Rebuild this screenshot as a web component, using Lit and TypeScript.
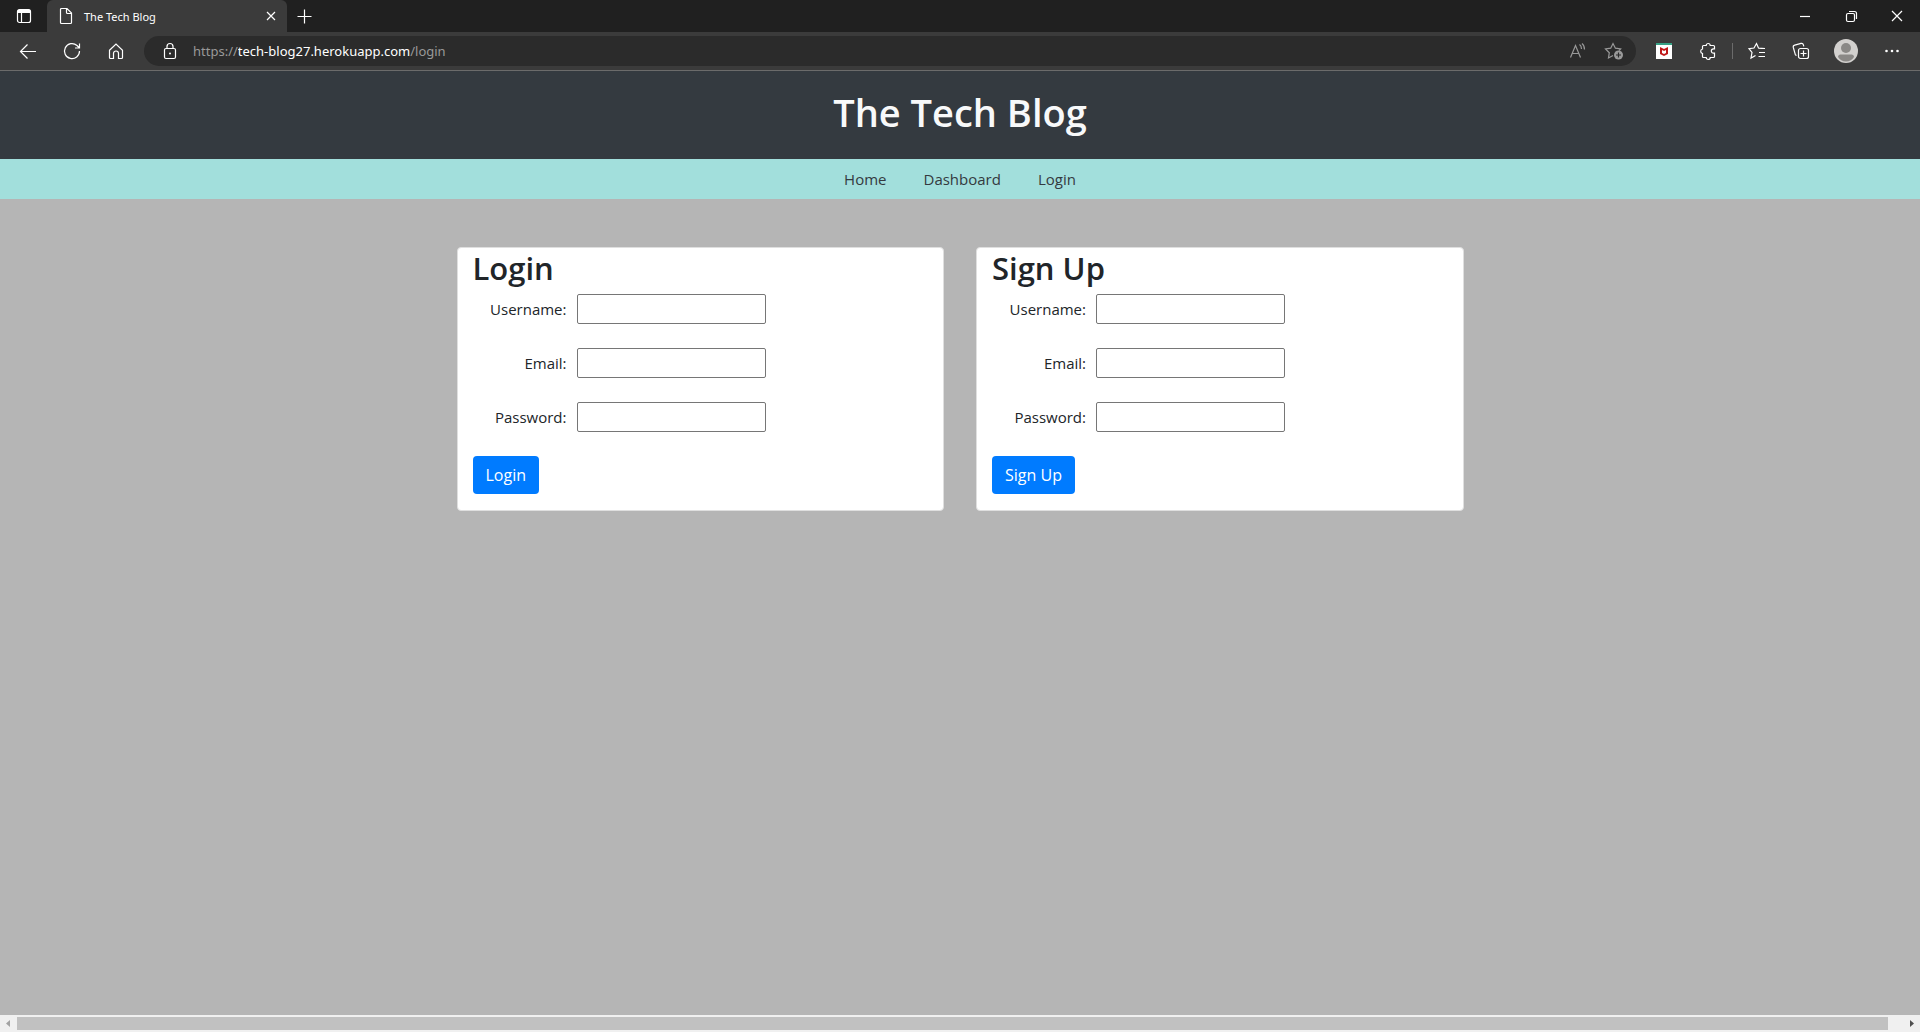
import { LitElement, html, css, svg } from "lit";
import { customElement, property } from "lit/decorators.js";

const icons: Record<string, unknown> = {
  tabs: svg`<rect x="3.5" y="3.5" width="13" height="13" rx="2"/><path class="fill" d="M3.500 5.500a2 2 0 0 1 2-2h9a2 2 0 0 1 2 2v1.500h-13z"/><path d="M7.500 6v10.500"/>`,
  page: svg`<path d="M4.5 3.5a1 1 0 0 1 1-1h5.5l4.5 4.5v9.500a1 1 0 0 1-1 1h-9a1 1 0 0 1-1-1zM10.500 2.500v4a1 1 0 0 0 1 1h4"/>`,
  close: svg`<path d="M6 6l8 8M14 6l-8 8"/>`,
  plus: svg`<path d="M10.500 3.500v14M3.500 10.500h14"/>`,
  back: svg`<path d="M18 10.500H2.500M9.500 3.500l-7 7 7 7"/>`,
  reload: svg`<path d="M17.500 10a7.500 7.500 0 1 1-2.500-5.500l2 2M17.500 2.500v4.500h-4.500"/>`,
  home: svg`<path d="M3.500 9.200l6.500-6.200 6.500 6.200v7.300a1 1 0 0 1-1 1h-3v-5a2 2 0 0 0-5 0v5h-3a1 1 0 0 1-1-1z"/>`,
  lock: svg`<rect x="4.500" y="7.500" width="11" height="10" rx="1.500"/><path d="M7 7.500V5.500a3 3 0 0 1 6 0v2"/><circle class="fill" cx="10" cy="12.500" r="1"/>`,
  read: svg`<path d="M2.500 16.500L7.500 4.500l5 12M4.500 12.500h6M11.500 3.500c1.500 1 2 2.500 2 4.500M14 2.500c2 1.500 2.500 3.500 2.500 6"/>`,
  starAdd: svg`<path d="M9 14.500l-4.500 2.500.8-5.300-3.800-3.700 5.200-.8L9 2.500l2.400 4.700 5.200.8-1.600 1.500"/><circle class="fill" cx="14.500" cy="14" r="4.500"/><path class="cut" d="M14.500 11.500v5M12 14h5"/>`,
  puzzle: svg`<path d="M5.500 4.500h2.700a2 2 0 0 1 4 0h3.300a1 1 0 0 1 1 1v2.300h-1a2.200 2.200 0 0 0 0 4.400h1v3.300a1 1 0 0 1-1 1h-3.300a2 2 0 0 1-4 0h-2.700a1 1 0 0 1-1-1v-3a2.300 2.300 0 0 1 0-4.500v-2.500a1 1 0 0 1 1-1z"/>`,
  favorites: svg`<path d="M8.500 14.500L4 17l1-5.500L2 7.700l5-.7 2.500-4.500L11.500 7l6.500.5M12 11.500h6M11.500 15.500h6.500M11.500 7.500h6.500"/>`,
  collections: svg`<rect x="7.500" y="7.500" width="10" height="10" rx="2"/><path d="M12.500 9.500v6M9.500 12.500h6M5.500 14.500a2 2 0 0 1-1.300-1.300L2.300 6.500a2 2 0 0 1 1.400-2.400l6.300-1.700a2 2 0 0 1 2.400 1.400l.4 1.500"/>`,
  more: svg`<circle class="fill" cx="4.500" cy="10" r="1.300"/><circle class="fill" cx="10" cy="10" r="1.300"/><circle class="fill" cx="15.500" cy="10" r="1.300"/>`,
  minimize: svg`<path d="M5 10.500h10"/>`,
  restore: svg`<rect x="5.500" y="7.500" width="8" height="8" rx="1.500"/><path d="M8 5.500h5.500a2 2 0 0 1 2 2V13"/>`,
  exit: svg`<path d="M5 5l10 10M15 5L5 15"/>`,
};

const icon = (name: string) =>
  html`<svg class="icon" viewBox="0 0 20 20" aria-hidden="true">${icons[name]}</svg>`;

@customElement("browser-chrome")
export class BrowserChrome extends LitElement {
  static styles = css`
    :host { display: block; background: #3b3b3b; color: #fff; border-bottom: 1px solid #6b6b6b; }
    button { border: 0; background: none; padding: 0; color: inherit; display: grid; place-items: center; }
    .icon { width: 20px; height: 20px; fill: none; stroke: currentColor; stroke-width: 1.2; display: block; }
    .icon .fill { fill: currentColor; stroke: none; }
    .icon .cut { stroke: #2b2b2b; }
    .strip { display: flex; height: 32px; background: #202020; }
    .workspace { width: 47px; }
    .tab { width: 240px; display: flex; align-items: center; background: #3b3b3b; border-radius: 6px 6px 0 0; padding: 0 6px 0 9px; box-sizing: border-box; }
    .title { flex: 1; padding-left: 8px; font: 11px "Noto Sans", sans-serif; }
    .add { width: 34px; }
    .controls { margin-left: auto; display: flex; }
    .controls button { width: 46px; }
    .bar { display: flex; align-items: center; height: 38px; padding: 0 5px 0 6px; }
    .nav { width: 44px; height: 30px; }
    .wide { width: 46px; }
    .address { flex: 1; display: flex; align-items: center; height: 30px; border-radius: 15px; background: #2b2b2b; margin: 0 6px; padding: 0 12px 0 16px; color: #999; font: 13px "Noto Sans", sans-serif; }
    .lock { width: 20px; margin-right: 13px; color: #fff; }
    .url { font: inherit; color: #fff; border: 0; padding: 0; margin: 0; background: none; field-sizing: content; outline: 0; }
    .page-tools { margin-left: auto; display: flex; gap: 16px; }
    .divider { width: 1px; height: 16px; background: #6b6b6b; margin: 0 2px; }
    .avatar { width: 24px; height: 24px; display: block; }
    .shield { width: 16px; height: 16px; display: block; }
  `;

  render() {
    return html`
      <div class="strip">
        <button class="workspace" aria-label="Tab actions">${icon("tabs")}</button>
        <div class="tab">
          ${icon("page")}<span class="title">The Tech Blog</span>
          <button aria-label="Close tab">${icon("close")}</button>
        </div>
        <button class="add" aria-label="New tab">${icon("plus")}</button>
        <div class="controls">
          <button aria-label="Minimize">${icon("minimize")}</button>
          <button aria-label="Restore">${icon("restore")}</button>
          <button aria-label="Close window">${icon("exit")}</button>
        </div>
      </div>
      <div class="bar">
        <button class="nav" aria-label="Back">${icon("back")}</button>
        <button class="nav" aria-label="Refresh">${icon("reload")}</button>
        <button class="nav" aria-label="Home">${icon("home")}</button>
        <div class="address">
          <button class="lock" aria-label="Site information">${icon("lock")}</button>
          <span>https://</span><input class="url" aria-label="Address" value="tech-blog27.herokuapp.com" /><span>/login</span>
          <div class="page-tools">
            <button aria-label="Read aloud">${icon("read")}</button>
            <button aria-label="Add to favorites">${icon("starAdd")}</button>
          </div>
        </div>
        <button class="nav" aria-label="Web protection">
          <svg class="shield" viewBox="0 0 16 16"><path fill="#fff" d="M0 0h16v16H0z"/><path fill="#36a184" d="M0 0h16v2H0z"/><path fill="#c01818" d="M4 4l4 2 4-2v7l-4 2-4-2zM6 7v3l2 1 2-1V7L8 8z" fill-rule="evenodd"/></svg>
        </button>
        <button class="nav" aria-label="Extensions">${icon("puzzle")}</button>
        <span class="divider"></span>
        <button class="nav" aria-label="Favorites">${icon("favorites")}</button>
        <button class="nav" aria-label="Collections">${icon("collections")}</button>
        <button class="nav wide" aria-label="Profile">
          <svg class="avatar" viewBox="0 0 24 24"><circle cx="12" cy="12" r="12" fill="#d2d0ce"/><circle cx="12" cy="9" r="5" fill="#8a8886"/><path fill="#8a8886" d="M4 18c0-1.500 1-2.500 2.500-2.500h11c1.500 0 2.500 1 2.500 2.500-1.500 2.500-4.500 4.500-8 4.500s-6.500-2-8-4.500z"/></svg>
        </button>
        <button class="nav wide" aria-label="Settings and more">${icon("more")}</button>
      </div>
    `;
  }
}

@customElement("credential-card")
export class CredentialCard extends LitElement {
  @property() heading = "";

  static styles = css`
    :host { display: block; background: #fff; border: 1px solid #dfdfdf; border-radius: 4px; padding: 1px 15px 16px; color: #212529; font-size: 16px; line-height: 24px; }
    h2 { margin: 0 0 7px; font-size: 31px; font-weight: 600; line-height: 38px; }
    .field { display: grid; grid-template-columns: 94px 189px; column-gap: 10px; align-items: center; margin-bottom: 24px; }
    label { text-align: right; font-size: 15px; }
    input { box-sizing: border-box; width: 100%; height: 30px; border: 1px solid #767676; border-radius: 2px; background: #fff; font: inherit; padding: 1px 2px; }
    button { display: block; height: 38px; padding: 0 13px; border: 0; border-radius: 4px; background: #007bff; color: #fff; font: inherit; }
  `;

  render() {
    return html`
      <h2>${this.heading}</h2>
      <form @submit=${(e: Event) => e.preventDefault()}>
        ${["Username", "Email", "Password"].map(
          (name) => html`<div class="field">
            <label for=${name}>${name}:</label>
            <input id=${name} type=${name === "Password" ? "password" : "text"} />
          </div>`
        )}
        <button>${this.heading}</button>
      </form>
    `;
  }
}

@customElement("app-root")
export class AppRoot extends LitElement {
  static styles = css`
    :host { display: flex; flex-direction: column; min-height: 100vh; background: #b5b5b5; font-family: "Open Sans", sans-serif; }
    header { background: #343a40; color: #f8f9fa; text-align: center; padding: 17px 0 23px; }
    h1 { margin: 0; font-size: 38px; line-height: 48px; font-weight: 600; }
    nav { display: flex; justify-content: center; gap: 37px; background: #a2dfdc; height: 40px; align-items: center; }
    nav a { color: #343a40; text-decoration: none; font-size: 15px; line-height: 24px; }
    main { flex: 1; }
    .cards { display: grid; grid-template-columns: 1fr 1fr; gap: 32px; max-width: 1007px; margin: 48px auto; }
    .scroll { display: flex; align-items: center; height: 17px; background: #f0f0f0; }
    .scroll svg { width: 17px; height: 17px; }
    .thumb { flex: 1; height: 13px; margin-right: 15px; background: #c1c1c1; }
  `;

  render() {
    return html`
      <browser-chrome></browser-chrome>
      <header><h1>The Tech Blog</h1></header>
      <nav><a href="#home">Home</a><a href="#dashboard">Dashboard</a><a href="#login">Login</a></nav>
      <main>
        <div class="cards">
          <credential-card heading="Login"></credential-card>
          <credential-card heading="Sign Up"></credential-card>
        </div>
      </main>
      <div class="scroll" aria-hidden="true">
        <svg viewBox="0 0 17 17"><path fill="#a3a3a3" d="M10 5v7L6 8.500z"/></svg>
        <div class="thumb"></div>
        <svg viewBox="0 0 17 17"><path fill="#505050" d="M7 5v7l4-3.500z"/></svg>
      </div>
    `;
  }
}
